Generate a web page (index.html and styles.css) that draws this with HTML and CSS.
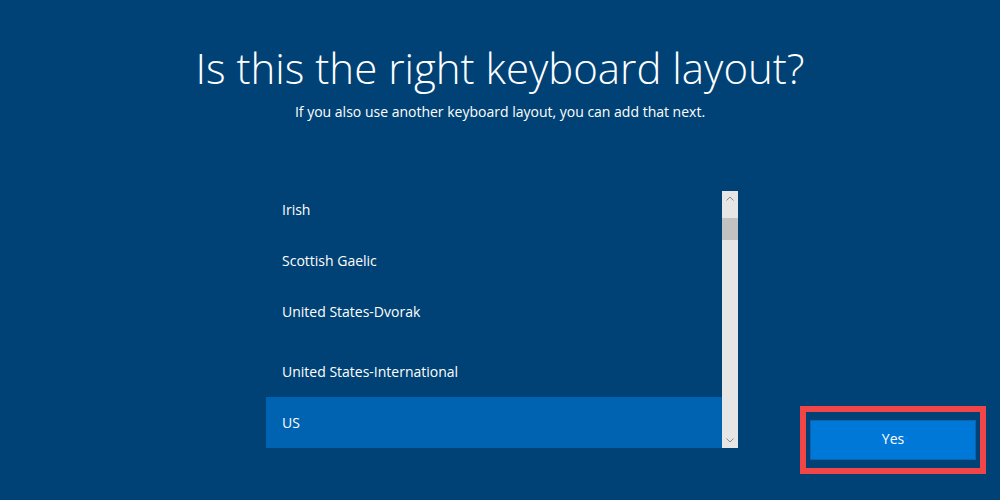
FILE: index.html
```html
<!DOCTYPE html>
<html lang="en">
<head>
<meta charset="utf-8">
<title>Keyboard layout</title>
<link rel="stylesheet" href="styles.css">
</head>
<body>
<div class="page">
  <header class="header">
    <h1 class="title">Is this the right keyboard layout?</h1>
    <p class="subtitle">If you also use another keyboard layout, you can add that next.</p>
  </header>
  <div class="content">
    <div class="listbox">
      <div class="list">
        <ul class="items">
          <li class="item">Irish</li>
          <li class="item">Scottish Gaelic</li>
          <li class="item">United States-Dvorak</li>
          <li class="item item-gap">United States-International</li>
          <li class="item item-selected">US</li>
        </ul>
      </div>
      <div class="scrollbar">
        <div class="arrow arrow-up">
          <svg width="8" height="5" viewBox="0 0 8 5"><path d="M0.5 4.5 L4 1 L7.5 4.5" fill="none" stroke="#8a8a8a" stroke-width="1"/></svg>
        </div>
        <div class="track">
          <div class="thumb"></div>
        </div>
        <div class="arrow arrow-down">
          <svg width="8" height="5" viewBox="0 0 8 5"><path d="M0.5 0.5 L4 4 L7.5 0.5" fill="none" stroke="#8a8a8a" stroke-width="1"/></svg>
        </div>
      </div>
    </div>
    <div class="actions">
      <div class="highlight">
        <button class="btn">Yes</button>
      </div>
    </div>
  </div>
</div>
</body>
</html>
```
FILE: styles.css
```css
html, body {
  margin: 0;
  padding: 0;
}
body {
  background: #004275;
  color: #ffffff;
  font-family: "Open Sans", "Noto Sans", "Liberation Sans", sans-serif;
  width: 1000px;
  height: 500px;
  overflow: hidden;
}
.page {
  display: flex;
  flex-direction: column;
  height: 500px;
}
.header {
  padding-top: 43px;
  text-align: center;
}
.title {
  margin: 0;
  font-weight: 300;
  font-size: 42px;
  line-height: 50px;
  letter-spacing: 0;
}
.subtitle {
  margin: 9px 0 0;
  font-size: 14px;
  line-height: 20px;
}
.content {
  margin-top: 69px;
  display: grid;
  grid-template-columns: 266px 472px 1fr;
  height: 283px;
}
.listbox {
  grid-column: 2;
  align-self: start;
  display: flex;
  height: 257px;
}
.list {
  flex: 1;
  overflow: hidden;
}
.items {
  list-style: none;
  margin: -7px 0 0;
  padding: 0;
}
.item {
  height: 51px;
  display: flex;
  align-items: center;
  padding-left: 16px;
  font-size: 14px;
}
.item-gap {
  margin-top: 9px;
}
.item-selected {
  background: #0063b1;
}
.scrollbar {
  width: 16px;
  background: #e6e6e6;
  display: flex;
  flex-direction: column;
}
.arrow {
  height: 17px;
  display: flex;
  align-items: center;
  justify-content: center;
}
.arrow-up {
  align-items: flex-start;
  height: 14px;
}
.arrow-up svg {
  margin-top: 5px;
}
.arrow-down svg {
  margin-top: 2px;
}
.track {
  flex: 1;
}
.thumb {
  margin-top: 13px;
  height: 22px;
  background: #c2c2c2;
}
.actions {
  grid-column: 3;
  align-self: end;
  justify-self: end;
  margin-right: 14px;
}
.highlight {
  border: 6px solid #f24548;
  padding: 8px 4px;
  display: flex;
}
.btn {
  width: 166px;
  height: 40px;
  background: #0078d7;
  border: 1px solid #0a64ad;
  color: #ffffff;
  font-family: "Open Sans", "Noto Sans", "Liberation Sans", sans-serif;
  font-size: 14px;
  line-height: 36px;
  padding: 0 0 2px;
  margin: 0;
}
```
